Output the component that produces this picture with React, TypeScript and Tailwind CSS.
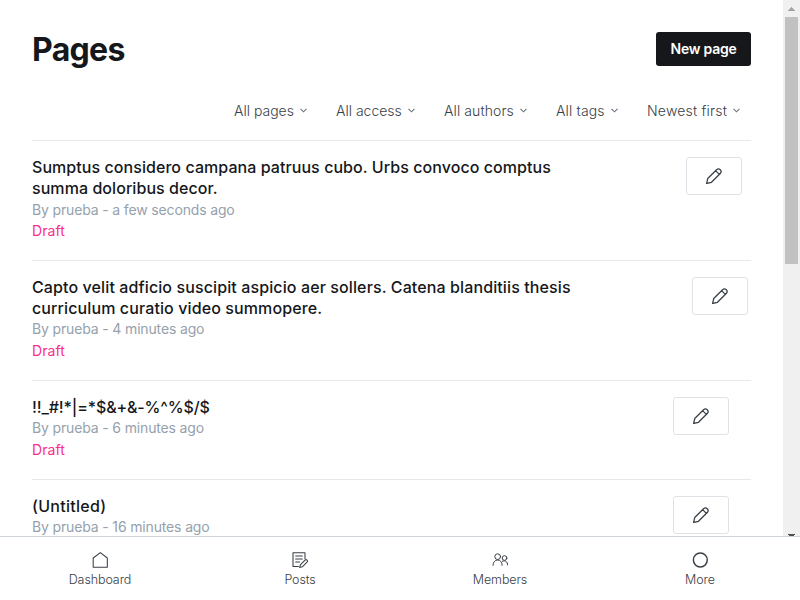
import type { ReactNode } from 'react';

type Page = { title: string[]; meta: string; draft: boolean; height: string; inset: string; tracking: string; metaGap: string };

const pages: Page[] = [
  {
    title: ['Sumptus considero campana patruus cubo. Urbs convoco comptus', 'summa doloribus decor.'],
    meta: 'By prueba - a few seconds ago',
    draft: true,
    height: 'h-[120px]',
    inset: 'mr-[9px]',
    tracking: 'tracking-[0.063px]',
    metaGap: '',
  },
  {
    title: ['Capto velit adficio suscipit aspicio aer sollers. Catena blanditiis thesis', 'curriculum curatio video summopere.'],
    meta: 'By prueba - 4 minutes ago',
    draft: true,
    height: 'h-[120px]',
    inset: 'mr-[3px]',
    tracking: 'tracking-[0.110px]',
    metaGap: '-mt-px mb-px',
  },
  {
    title: ['!!_#!*|=*$&+&-%^%$/$'],
    meta: 'By prueba - 6 minutes ago',
    draft: true,
    height: 'h-[99px]',
    inset: 'mr-[22px]',
    tracking: 'tracking-[-0.130px]',
    metaGap: '-mt-px mb-px',
  },
  {
    title: ['(Untitled)'],
    meta: 'By prueba - 16 minutes ago',
    draft: false,
    height: 'h-[57px]',
    inset: 'mr-[22px]',
    tracking: 'tracking-[0.280px]',
    metaGap: '-mt-px',
  },
];

const filters = [
  { label: 'All pages', width: 'w-[102px]' },
  { label: 'All access', width: 'w-[108px]' },
  { label: 'All authors', width: 'w-[112px] tracking-[0.1px]' },
  { label: 'All tags', width: 'w-[91px] tracking-[0.15px]' },
  { label: 'Newest first', width: 'w-[104px] tracking-[0.2px]' },
];

function Pencil() {
  return (
    <svg className="size-4" viewBox="0 0 24 24" fill="none" stroke="#394047" strokeWidth="1.900" strokeLinejoin="round" strokeLinecap="round">
      <path d="M21.4 2.600a4 4 0 0 0-5.600 0L2.600 15.800.9 23.200 8.200 21.400 21.400 8.200a4 4 0 0 0 0-5.600ZM14.400 4l5.600 5.600" />
    </svg>
  );
}

function Row({ page }: { page: Page }) {
  return (
    <li className={`flex shrink-0 items-start justify-between border-b border-[#e6e9eb] pt-4 last:border-b-0 ${page.height}`}>
      <div>
        <h3 className={`text-[16px] font-[550] leading-[21px] text-[#15171a] ${page.tracking}`}>
          {page.title.map((line) => (
            <span key={line} className="block whitespace-nowrap">{line}</span>
          ))}
        </h3>
        <p className={`text-[14px] leading-[21px] tracking-[-0.150px] text-[#95a1ad] ${page.metaGap}`}>{page.meta}</p>
        {page.draft && <p className="text-[14px] leading-[21px] tracking-[0.100px] text-[#fb2d8d]">Draft</p>}
      </div>
      <button className={`flex h-[38px] w-14 shrink-0 items-center justify-center rounded-[3px] border border-[#dfe3e7] ${page.inset}`}>
        <Pencil />
      </button>
    </li>
  );
}

function Tab({ label, children }: { label: string; children: ReactNode }) {
  return (
    <a className="flex flex-1 flex-col items-center pt-[15px] text-[12.5px] font-light leading-4 tracking-[-0.1px] text-[#394047]">
      <svg className="size-4" viewBox="0 0 24 24" fill="none" stroke="#394047" strokeWidth="1.600" strokeLinejoin="round" strokeLinecap="round">
        {children}
      </svg>
      <span className="mt-1">{label}</span>
    </a>
  );
}

export default function App() {
  return (
    <div className="flex h-[600px] w-[800px] flex-col overflow-hidden bg-white font-['Inter',sans-serif]">
      <div className="flex h-[536px] overflow-hidden">
        <main className="flex w-[783px] flex-col overflow-hidden pl-8 pr-8">
          <header className="flex h-[66px] shrink-0 items-start justify-between pt-8">
            <h1 className="text-[32px] font-bold leading-9 tracking-[-0.7px] text-[#15171a]">Pages</h1>
            <button className="h-[34px] w-[95px] rounded-[3px] bg-[#15171a] text-[14px] font-semibold leading-[34px] tracking-[-0.25px] text-white">New page</button>
          </header>
          <div className="mt-[34px] flex h-[41px] shrink-0 justify-end border-b border-[#e6e9eb]">
            {filters.map((f) => (
              <div key={f.label} className={`flex h-5 items-center whitespace-nowrap text-[14px] font-light text-[#394047] ${f.width}`}>
                {f.label}
                <svg className="ml-1.5 h-[5px] w-[7px]" viewBox="0 0 7 5" fill="none" stroke="#6b7680" strokeWidth="1.150">
                  <path d="M.5.8l3 3 3-3" />
                </svg>
              </div>
            ))}
          </div>
          <ul>
            {pages.map((page) => (
              <Row key={page.meta} page={page} />
            ))}
          </ul>
        </main>
        <div className="flex h-[537px] w-[17px] flex-col items-center bg-[#f0f0f0]">
          <svg className="h-[17px] w-[17px]" viewBox="0 0 17 17" fill="#a3a3a3" shapeRendering="crispEdges">
            <path d="M8 7h1v1h1v1h1v1h1v1H5v-1h1V9h1V8h1z" />
          </svg>
          <div className="h-[247px] w-[13px] bg-[#c1c1c1]" />
          <svg className="mt-auto mb-px h-[2px] w-[7px]" viewBox="0 0 7 2" fill="#505050" shapeRendering="crispEdges">
            <path d="M0 0h7v1H6v1H1V1H0z" />
          </svg>
        </div>
      </div>
      <nav className="flex h-16 shrink-0 border-t border-[#ced4d9]">
        <Tab label="Dashboard">
          <path d="M1.800 9 12.500 1l10.500 8V23H1.800Z" />
        </Tab>
        <Tab label="Posts">
          <path d="M9.500 21.800H1.500V1h18v9M5.500 6h10M5.500 10.500h10M5.500 15h6" />
          <path d="m22.500 12.200c-.9-.9-2.100-.9-3 0L12.500 19.200l-1 4 4-1 7-7c.9-.9.9-2.100 0-3Z" />
        </Tab>
        <Tab label="Members">
          <g strokeWidth="1.500">
            <circle cx="8.500" cy="7" r="4.300" />
            <path d="M1.500 20c0-4.500 2.800-8 7-8s6.700 3.500 6.700 8" />
            <circle cx="18.800" cy="9" r="3.500" />
            <path d="M15.500 14c4-2.500 8 .5 8 5.500" />
          </g>
        </Tab>
        <Tab label="More">
          <circle cx="12.500" cy="12" r="10.400" strokeWidth="2.200" />
        </Tab>
      </nav>
    </div>
  );
}
